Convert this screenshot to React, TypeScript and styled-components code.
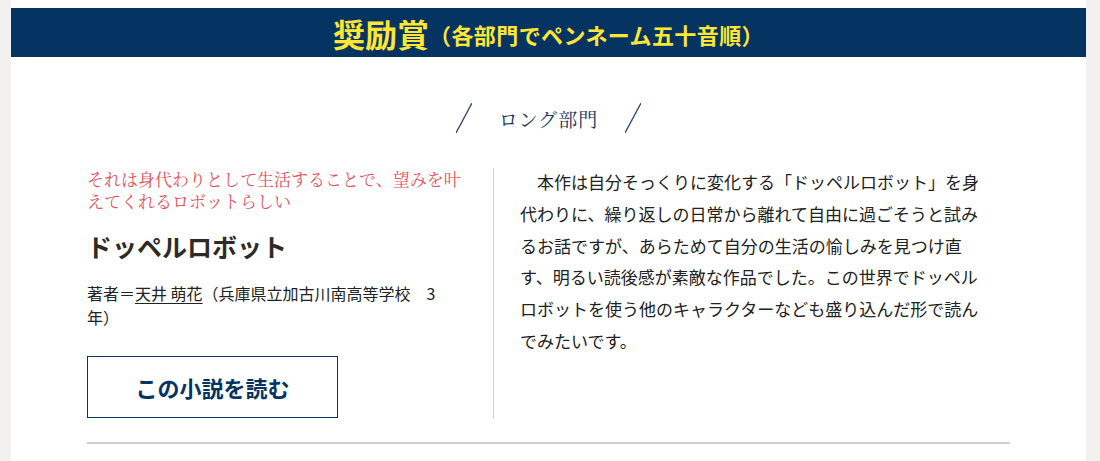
import React from 'react';
import styled, { createGlobalStyle } from 'styled-components';

const GlobalStyle = createGlobalStyle`
  html, body {
    margin: 0;
    padding: 0;
    background-color: #f2f1ef;
    font-family: "Noto Sans CJK JP", "Noto Sans", sans-serif;
    color: #222;
  }
`;

const Panel = styled.div`
  width: 1075px;
  min-height: 461px;
  margin-left: 11px;
  padding-top: 8px;
  box-sizing: border-box;
  background-color: #fff;
  overflow: hidden;
`;

const AwardHeader = styled.h1`
  margin: 0;
  height: 49px;
  display: flex;
  align-items: center;
  justify-content: center;
  background-color: #053462;
  color: #ffe534;
  font-weight: 700;
  font-size: 32px;
  line-height: 1;
`;

const AwardNote = styled.span`
  font-size: 22px;
  letter-spacing: 0.4px;
  padding-top: 2px;
`;

const SectionHeading = styled.div`
  margin-top: 46px;
  height: 30px;
  display: flex;
  align-items: center;
  justify-content: center;
  gap: 27px;
`;

const SectionTitle = styled.h2`
  margin: 0;
  font-family: "Noto Serif CJK JP", "Noto Sans CJK JP", serif;
  font-weight: 400;
  font-size: 19px;
  letter-spacing: 1px;
  color: #17325a;
`;

const Columns = styled.div`
  width: 923px;
  margin: 35px auto 0;
  display: grid;
  grid-template-columns: 407px 1fr;
`;

const WorkInfo = styled.div`
  padding-right: 31px;
  border-right: 1px solid #cfcfcf;
`;

const Catch = styled.p`
  margin: 0;
  font-family: "Noto Serif CJK JP", "Noto Sans CJK JP", serif;
  font-size: 17px;
  line-height: 22px;
  color: #e0525c;
`;

const WorkTitle = styled.h3`
  margin: 17px 0 0;
  font-size: 25px;
  line-height: 35px;
  font-weight: 700;
  color: #2f2a26;
`;

const Author = styled.p`
  margin: 17px 0 0;
  font-size: 16px;
  line-height: 24px;
  color: #222;
`;

const AuthorName = styled.a`
  color: #222;
  text-decoration: underline;
  text-underline-offset: 3px;
`;

const ReadButton = styled.a`
  margin-top: 27px;
  width: 251px;
  height: 62px;
  box-sizing: border-box;
  display: flex;
  align-items: center;
  justify-content: center;
  border: 1px solid #053462;
  color: #053462;
  font-size: 22px;
  font-weight: 700;
  text-decoration: none;
`;

const Review = styled.p`
  margin: -2px 0 0;
  padding: 0 25px 0 26px;
  font-size: 17px;
  line-height: 31.8px;
  text-indent: 1em;
  color: #222;
`;

const Rule = styled.hr`
  width: 923px;
  margin: 24px auto 0;
  border: none;
  border-top: 2px solid #d0d0d0;
`;

const Slash = () => (
  <svg width="16" height="30" viewBox="0 0 16 30">
    <line x1="16" y1="0" x2="0" y2="30" stroke="#2f4d72" strokeWidth="1.3" />
  </svg>
);

export default function App() {
  return (
    <>
      <GlobalStyle />
      <Panel>
        <AwardHeader>
          奨励賞<AwardNote>（各部門でペンネーム五十音順）</AwardNote>
        </AwardHeader>

        <SectionHeading>
          <Slash />
          <SectionTitle>ロング部門</SectionTitle>
          <Slash />
        </SectionHeading>

        <Columns>
          <WorkInfo>
            <Catch>それは身代わりとして生活することで、望みを叶えてくれるロボットらしい</Catch>
            <WorkTitle>ドッペルロボット</WorkTitle>
            <Author>
              著者＝<AuthorName href="#">天井 萌花</AuthorName>（兵庫県立加古川南高等学校　3<wbr />年）
            </Author>
            <ReadButton href="#">この小説を読む</ReadButton>
          </WorkInfo>
          <Review>
            本作は自分そっくりに変化する「ドッペルロボット」を身代わりに、繰り返しの日常から離れて自由に過ごそうと試みるお話ですが、あらためて自分の生活の愉しみを見つけ直す、明るい読後感が素敵な作品でした。この世界でドッペルロボットを使う他のキャラクターなども盛り込んだ形で読んでみたいです。
          </Review>
        </Columns>

        <Rule />
      </Panel>
    </>
  );
}
